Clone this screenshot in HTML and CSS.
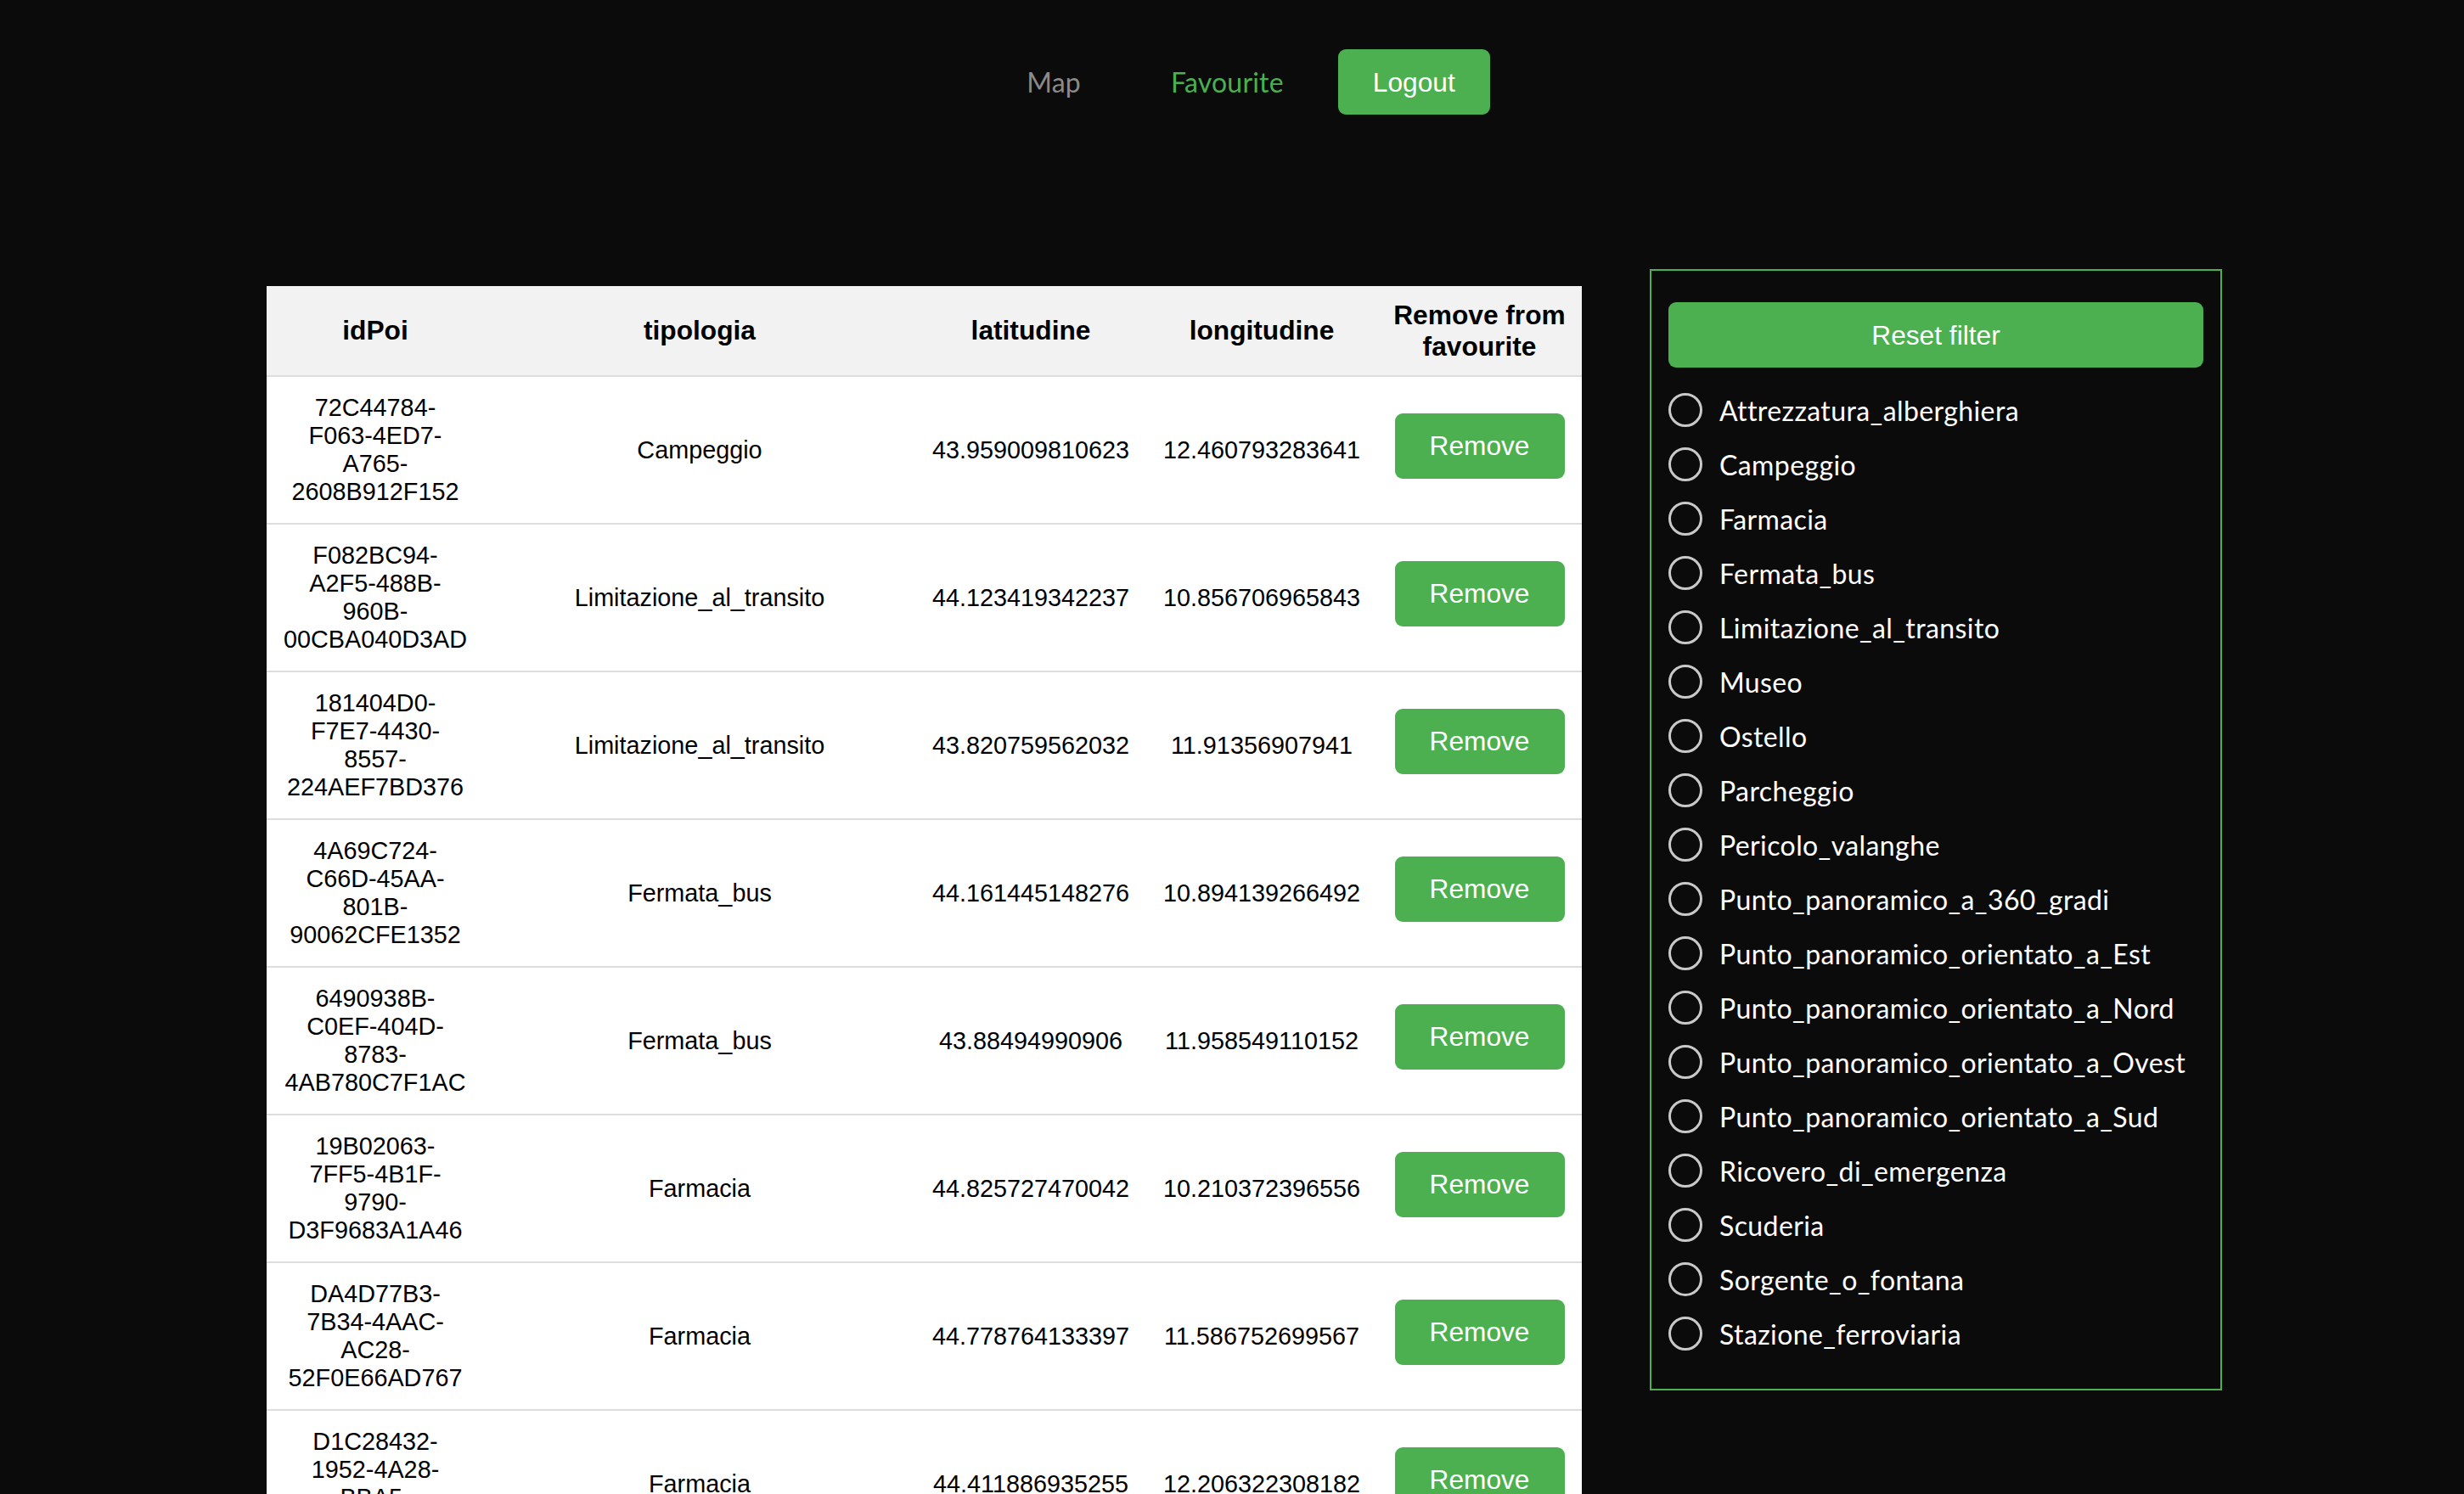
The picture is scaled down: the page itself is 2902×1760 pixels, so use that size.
FILE: index.html
```html
<!DOCTYPE html>
<html lang="it">
<head>
<meta charset="utf-8">
<title>Favourite</title>
<link rel="stylesheet" href="styles.css">
</head>
<body>
<nav class="nav">
  <a class="nav-link nav-map" href="#">Map</a>
  <a class="nav-link nav-fav" href="#">Favourite</a>
  <button class="btn btn-logout" type="button">Logout</button>
</nav>
<main class="main">
  <table class="fav-table">
    <colgroup>
      <col class="c-id"><col class="c-tip"><col class="c-lat"><col class="c-lon"><col class="c-rm">
    </colgroup>
    <thead>
      <tr><th>idPoi</th><th>tipologia</th><th>latitudine</th><th>longitudine</th><th>Remove from favourite</th></tr>
    </thead>
    <tbody>
      <tr><td>72C44784-F063-4ED7-A765-2608B912F152</td><td>Campeggio</td><td>43.959009810623</td><td>12.460793283641</td><td><button class="btn btn-remove" type="button">Remove</button></td></tr>
      <tr><td>F082BC94-A2F5-488B-960B-00CBA040D3AD</td><td>Limitazione_al_transito</td><td>44.123419342237</td><td>10.856706965843</td><td><button class="btn btn-remove" type="button">Remove</button></td></tr>
      <tr><td>181404D0-F7E7-4430-8557-224AEF7BD376</td><td>Limitazione_al_transito</td><td>43.820759562032</td><td>11.91356907941</td><td><button class="btn btn-remove" type="button">Remove</button></td></tr>
      <tr><td>4A69C724-C66D-45AA-801B-90062CFE1352</td><td>Fermata_bus</td><td>44.161445148276</td><td>10.894139266492</td><td><button class="btn btn-remove" type="button">Remove</button></td></tr>
      <tr><td>6490938B-C0EF-404D-8783-4AB780C7F1AC</td><td>Fermata_bus</td><td>43.88494990906</td><td>11.958549110152</td><td><button class="btn btn-remove" type="button">Remove</button></td></tr>
      <tr><td>19B02063-7FF5-4B1F-9790-D3F9683A1A46</td><td>Farmacia</td><td>44.825727470042</td><td>10.210372396556</td><td><button class="btn btn-remove" type="button">Remove</button></td></tr>
      <tr><td>DA4D77B3-7B34-4AAC-AC28-52F0E66AD767</td><td>Farmacia</td><td>44.778764133397</td><td>11.586752699567</td><td><button class="btn btn-remove" type="button">Remove</button></td></tr>
      <tr><td>D1C28432-1952-4A28-BBA5-7E61C0A93F24</td><td>Farmacia</td><td>44.411886935255</td><td>12.206322308182</td><td><button class="btn btn-remove" type="button">Remove</button></td></tr>
      <tr><td>5B0E27C1-84D3-4F6A-9C12-3A7D5E8B0F91</td><td>Museo</td><td>44.493675261187</td><td>11.342616283946</td><td><button class="btn btn-remove" type="button">Remove</button></td></tr>
    </tbody>
  </table>
  <aside class="filter">
    <button class="btn btn-reset" type="button">Reset filter</button>
    <ul class="filter-list">
      <li><label class="opt"><input type="radio" name="tipo"><span>Attrezzatura_alberghiera</span></label></li>
      <li><label class="opt"><input type="radio" name="tipo"><span>Campeggio</span></label></li>
      <li><label class="opt"><input type="radio" name="tipo"><span>Farmacia</span></label></li>
      <li><label class="opt"><input type="radio" name="tipo"><span>Fermata_bus</span></label></li>
      <li><label class="opt"><input type="radio" name="tipo"><span>Limitazione_al_transito</span></label></li>
      <li><label class="opt"><input type="radio" name="tipo"><span>Museo</span></label></li>
      <li><label class="opt"><input type="radio" name="tipo"><span>Ostello</span></label></li>
      <li><label class="opt"><input type="radio" name="tipo"><span>Parcheggio</span></label></li>
      <li><label class="opt"><input type="radio" name="tipo"><span>Pericolo_valanghe</span></label></li>
      <li><label class="opt"><input type="radio" name="tipo"><span>Punto_panoramico_a_360_gradi</span></label></li>
      <li><label class="opt"><input type="radio" name="tipo"><span>Punto_panoramico_orientato_a_Est</span></label></li>
      <li><label class="opt"><input type="radio" name="tipo"><span>Punto_panoramico_orientato_a_Nord</span></label></li>
      <li><label class="opt"><input type="radio" name="tipo"><span>Punto_panoramico_orientato_a_Ovest</span></label></li>
      <li><label class="opt"><input type="radio" name="tipo"><span>Punto_panoramico_orientato_a_Sud</span></label></li>
      <li><label class="opt"><input type="radio" name="tipo"><span>Ricovero_di_emergenza</span></label></li>
      <li><label class="opt"><input type="radio" name="tipo"><span>Scuderia</span></label></li>
      <li><label class="opt"><input type="radio" name="tipo"><span>Sorgente_o_fontana</span></label></li>
      <li><label class="opt"><input type="radio" name="tipo"><span>Stazione_ferroviaria</span></label></li>
    </ul>
  </aside>
</main>
</body>
</html>
```

FILE: styles.css
```css
html, body {
  margin: 0;
  padding: 0;
  background: #0c0b0c;
}

body {
  font-family: "Liberation Sans", Arial, sans-serif;
  color: #000;
}

.nav {
  display: flex;
  justify-content: center;
  align-items: center;
  padding: 58px 0 0 62px;
  height: 77px;
}

.nav-link {
  font-family: Lato, "Open Sans", sans-serif;
  font-size: 32px;
  letter-spacing: 0.2px;
  text-decoration: none;
}

.nav-map {
  color: #8a8a8a;
  margin-right: 106px;
}

.nav-fav {
  color: #4caf50;
  margin-right: 64px;
}

.btn {
  font-family: "Liberation Sans", Arial, sans-serif;
  font-size: 31.7px;
  color: #fff;
  background: #4caf50;
  border: none;
  border-radius: 9px;
  height: 77px;
  padding: 0 41px;
  line-height: 36px;
  cursor: pointer;
}

.main {
  display: flex;
  align-items: flex-start;
  gap: 80px;
  margin-top: 182px;
  padding-left: 314px;
}

.fav-table {
  margin-top: 20px;
  width: 1549px;
  table-layout: fixed;
  border-collapse: collapse;
  background: #fff;
  flex: none;
}

.c-id { width: 256px; }
.c-tip { width: 508px; }
.c-lat { width: 272px; }
.c-lon { width: 272px; }
.c-rm { width: 241px; }

.fav-table th {
  background: #f2f2f2;
  font-size: 31.7px;
  line-height: 36.5px;
  font-weight: bold;
  padding: 16px 18px;
  border-bottom: 2px solid #dddddd;
  text-align: center;
}

.fav-table td {
  font-size: 28.8px;
  line-height: 33px;
  padding: 20px 18px;
  border-bottom: 2px solid #dddddd;
  text-align: center;
  vertical-align: middle;
}

.fav-table th:first-child,
.fav-table td:first-child {
  padding-left: 20px;
  padding-right: 20px;
}

.btn-remove {
  display: block;
  margin: 0 auto 10px;
}

.filter {
  flex: none;
  width: 630px;
  border: 2px solid #4caf50;
  padding: 37px 20px 33px;
}

.btn-reset {
  display: block;
  width: 100%;
  margin-bottom: 18px;
}

.filter-list {
  list-style: none;
  margin: 0;
  padding: 0;
}

.opt {
  display: flex;
  align-items: center;
  height: 64px;
  gap: 20px;
  font-family: Lato, "Open Sans", sans-serif;
  font-size: 32px;
  letter-spacing: 0.4px;
  color: #fff;
  cursor: pointer;
}

.opt input {
  appearance: none;
  -webkit-appearance: none;
  margin: 0;
  width: 40px;
  height: 40px;
  border: 3.5px solid #c9c9c9;
  border-radius: 50%;
  box-sizing: border-box;
  background: transparent;
  flex: none;
}
```
